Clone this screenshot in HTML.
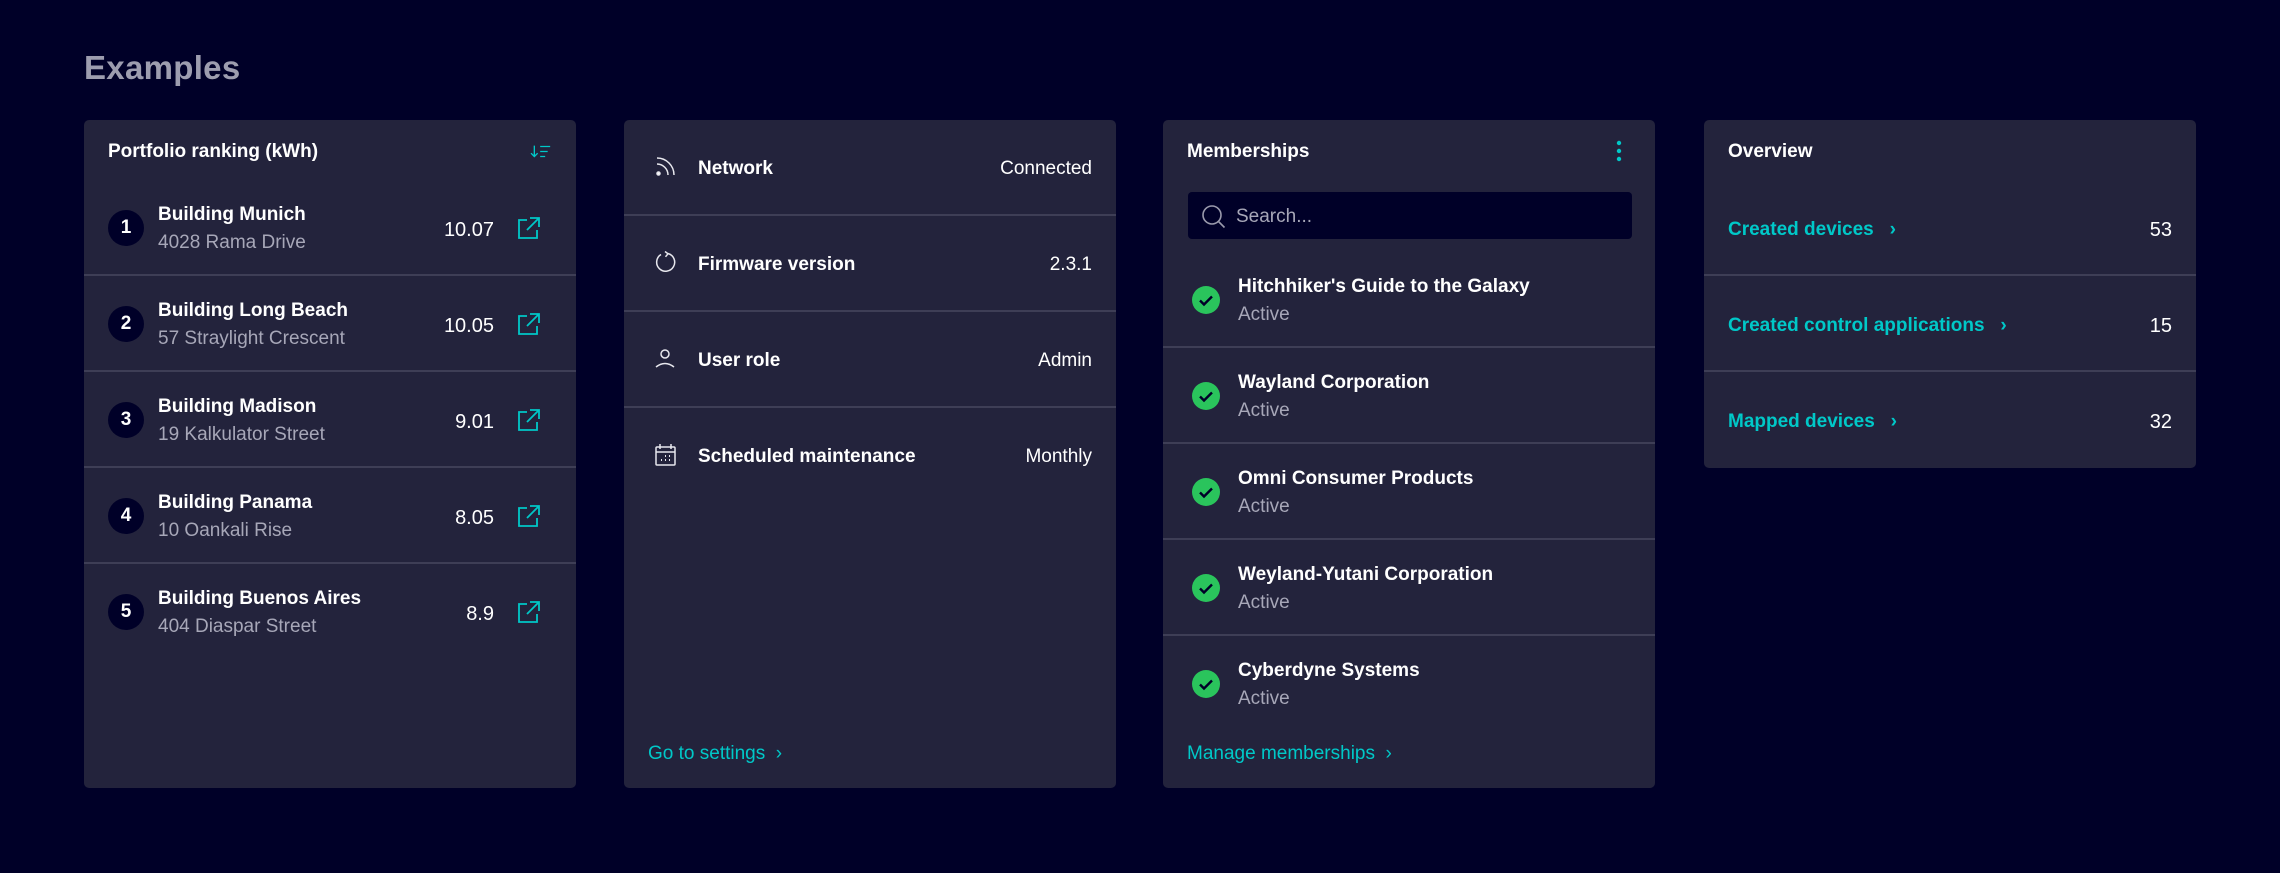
<!DOCTYPE html>
<html><head><meta charset="utf-8"><style>
*{margin:0;padding:0;box-sizing:border-box}
body{width:2280px;height:873px;background:#000028;font-family:"Liberation Sans",sans-serif;color:#fff;position:relative;overflow:hidden}
.abs{position:absolute}
h1{position:absolute;left:84px;top:49px;font-size:33px;font-weight:bold;color:#9d9daf;letter-spacing:0.3px}
.card{position:absolute;background:#23233c;border-radius:5px;top:120px;width:492px;overflow:hidden}
.div{position:absolute;left:0;right:0;height:2px;background:#3e3e56}
.b{font-weight:bold;font-size:19px;white-space:nowrap}
.g{color:#a7a7b8;font-size:19px;white-space:nowrap}
.t{color:#00c8c8;font-size:19px;white-space:nowrap}
.r{position:absolute;right:24px;font-size:20px;text-align:right}
.num{position:absolute;left:24px;width:36px;height:36px;border-radius:50%;background:#000028;font-weight:bold;font-size:19px;text-align:center;line-height:36px}
</style></head><body>
<h1>Examples</h1>

<div class="card" style="left:84px;height:668px">
  <div class="b abs" style="left:24px;top:21px">Portfolio ranking (kWh)</div>
  <svg class="abs" style="left:446px;top:24px" width="22" height="15" viewBox="0 0 26 18" fill="none" stroke="#00c8c8" stroke-width="1.6"><path d="M5 2v13M1 11l4 4 4-4M12 3h12M12 9h9M12 15h6"/></svg>
  <div class="div" style="top:154px"></div><div class="div" style="top:250px"></div><div class="div" style="top:346px"></div><div class="div" style="top:442px"></div>
</div>

<div class="card" style="left:624px;height:668px">
  <div class="div" style="top:94px"></div><div class="div" style="top:190px"></div><div class="div" style="top:286px"></div>
  <div class="t abs" style="left:24px;top:623px">Go to settings &nbsp;›</div>
</div>

<div class="card" style="left:1163px;height:668px">
  <div class="b abs" style="left:24px;top:21px">Memberships</div>
  <svg class="abs" style="left:452px;top:20px" width="8" height="22"><circle cx="4" cy="3" r="2.2" fill="#00c8c8"/><circle cx="4" cy="11" r="2.2" fill="#00c8c8"/><circle cx="4" cy="19" r="2.2" fill="#00c8c8"/></svg>
  <div class="abs" style="left:25px;top:72px;width:444px;height:47px;background:#000028;border-radius:4px"></div>
  <svg class="abs" style="left:38px;top:84px" width="26" height="26" fill="none" stroke="#9a9aac" stroke-width="1.6"><circle cx="11" cy="11" r="9"/><path d="M17.5 17.5l6 6"/></svg>
  <div class="g abs" style="left:73px;top:86px">Search...</div>
  <div class="div" style="top:226px"></div><div class="div" style="top:322px"></div><div class="div" style="top:418px"></div><div class="div" style="top:514px"></div>
  <div class="t abs" style="left:24px;top:623px">Manage memberships &nbsp;›</div>
</div>

<div class="card" style="left:1704px;height:348px">
  <div class="b abs" style="left:24px;top:21px">Overview</div>
  <div class="div" style="top:154px"></div><div class="div" style="top:250px"></div>
  <div class="t abs" style="left:24px;top:99px;font-weight:bold">Created devices &nbsp; ›</div><div class="r" style="top:99px">53</div>
  <div class="t abs" style="left:24px;top:195px;font-weight:bold">Created control applications &nbsp; ›</div><div class="r" style="top:195px">15</div>
  <div class="t abs" style="left:24px;top:291px;font-weight:bold">Mapped devices &nbsp; ›</div><div class="r" style="top:291px">32</div>
</div>

<div id="c1" class="abs" style="left:84px;top:0;width:492px;height:873px"></div>
<script>
var c1=document.getElementById('c1');
var d=[["Building Munich","4028 Rama Drive","10.07"],["Building Long Beach","57 Straylight Crescent","10.05"],["Building Madison","19 Kalkulator Street","9.01"],["Building Panama","10 Oankali Rise","8.05"],["Building Buenos Aires","404 Diaspar Street","8.9"]];
var h='';
d.forEach(function(r,i){var cy=228+96*i;
h+='<div class="num" style="top:'+(cy-18)+'px">'+(i+1)+'</div>';
h+='<div class="b abs" style="left:74px;top:'+(cy-24)+'px">'+r[0]+'</div>';
h+='<div class="g abs" style="left:74px;top:'+(cy+4)+'px">'+r[1]+'</div>';
h+='<div class="abs" style="right:82px;top:'+(cy-9)+'px;font-size:20px">'+r[2]+'</div>';
h+='<svg class="abs" style="left:434px;top:'+(cy-11)+'px" width="22" height="22" fill="none" stroke="#00c8c8" stroke-width="1.8"><path d="M9 3H1v18h18v-8M12 1h9v9M21 1L9 13"/></svg>';
});
c1.innerHTML=h;
var c2=document.createElement('div');c2.className='abs';c2.style.cssText='left:624px;top:0;width:492px;height:873px';
var e=[["Network","Connected"],["Firmware version","2.3.1"],["User role","Admin"],["Scheduled maintenance","Monthly"]];
var ic=['<path d="M3 9a11 11 0 0 1 11 11M3 3a17 17 0 0 1 17 17" /><circle cx="4.5" cy="18.5" r="1.5" fill="#fff"/>',
'<path d="M14 2.5A9 9 0 1 1 7 3.5"/><path d="M11 0.5l3 2.3-2.5 3"/>',
'<circle cx="11" cy="7" r="4"/><path d="M2 20q9-7 18 0"/>',
'<rect x="2" y="4" width="19" height="18" rx="1"/><path d="M2 9h19M6 1v5M17 1v5"/><path d="M7 17h1M11 17h1M15 17h1M11 13h1M15 13h1" stroke-width="2"/>'];
h='';
e.forEach(function(r,i){var cy=167+96*i;
h+='<svg class="abs" style="left:30px;top:'+(cy-12)+'px" width="24" height="24" fill="none" stroke="#e8e8ee" stroke-width="1.5">'+ic[i]+'</svg>';
h+='<div class="b abs" style="left:74px;top:'+(cy-9)+'px">'+r[0]+'</div>';
h+='<div class="r" style="top:'+(cy-9)+'px;font-size:19px">'+r[1]+'</div>';});
c2.innerHTML=h;document.body.appendChild(c2);
var c3=document.createElement('div');c3.className='abs';c3.style.cssText='left:1163px;top:0;width:492px;height:873px';
var m=["Hitchhiker's Guide to the Galaxy","Wayland Corporation","Omni Consumer Products","Weyland-Yutani Corporation","Cyberdyne Systems"];
h='';
m.forEach(function(n,i){var cy=300+96*i;
h+='<svg class="abs" style="left:29px;top:'+(cy-14)+'px" width="28" height="28"><circle cx="14" cy="14" r="14" fill="#2ac45c"/><path d="M8 14.5l4 4 8-8" fill="none" stroke="#000028" stroke-width="2.4"/></svg>';
h+='<div class="b abs" style="left:75px;top:'+(cy-24)+'px">'+n+'</div>';
h+='<div class="g abs" style="left:75px;top:'+(cy+4)+'px">Active</div>';});
c3.innerHTML=h;document.body.appendChild(c3);
</script>
</body></html>
